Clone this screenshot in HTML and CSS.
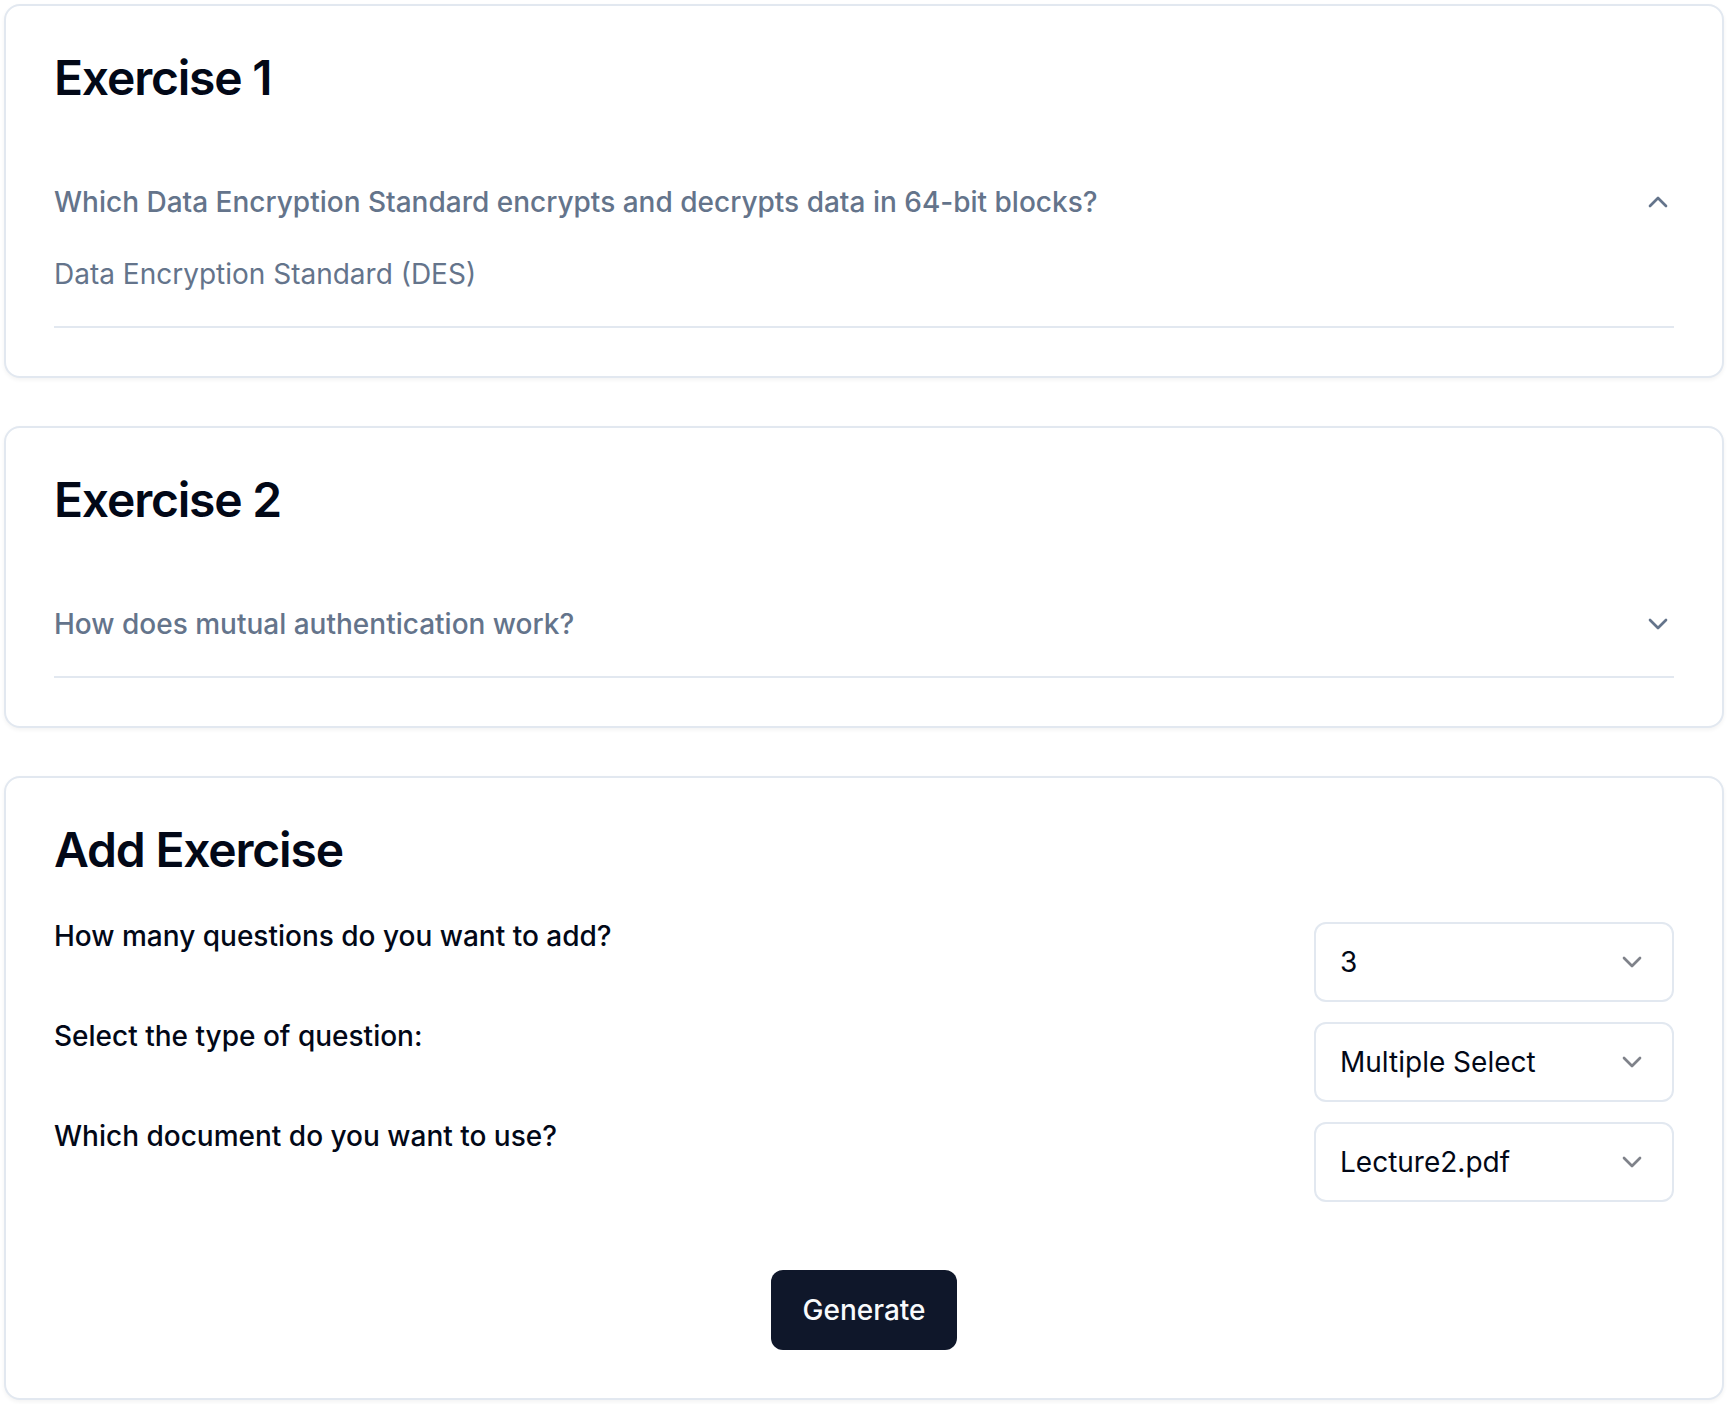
FILE: index.html
```html
<!DOCTYPE html>
<html lang="en">
<head>
<meta charset="utf-8">
<title>Exercises</title>
<link rel="stylesheet" href="styles.css">
</head>
<body>
<main class="page">
  <section class="card">
    <div class="card-header"><h3 class="card-title">Exercise 1</h3></div>
    <div class="card-content">
      <div class="acc-item">
        <button class="acc-trigger" type="button">
          <span>Which Data Encryption Standard encrypts and decrypts data in 64-bit blocks?</span>
          <svg class="acc-icon" viewBox="0 0 24 24" fill="none" stroke="currentColor" stroke-width="2" stroke-linecap="round" stroke-linejoin="round"><path d="m18 15-6-6-6 6"/></svg>
        </button>
        <div class="acc-content">Data Encryption Standard (DES)</div>
      </div>
    </div>
  </section>

  <section class="card">
    <div class="card-header"><h3 class="card-title">Exercise 2</h3></div>
    <div class="card-content">
      <div class="acc-item">
        <button class="acc-trigger" type="button">
          <span>How does mutual authentication work?</span>
          <svg class="acc-icon" viewBox="0 0 24 24" fill="none" stroke="currentColor" stroke-width="2" stroke-linecap="round" stroke-linejoin="round"><path d="m6 9 6 6 6-6"/></svg>
        </button>
      </div>
    </div>
  </section>

  <section class="card">
    <div class="card-header"><h3 class="card-title">Add Exercise</h3></div>
    <div class="card-content">
      <div class="form-rows">
        <div class="form-row">
          <label class="form-label">How many questions do you want to add?</label>
          <button class="select" type="button"><span>3</span>
            <svg class="sel-icon" viewBox="0 0 24 24" fill="none" stroke="currentColor" stroke-width="2" stroke-linecap="round" stroke-linejoin="round"><path d="m6 9 6 6 6-6"/></svg>
          </button>
        </div>
        <div class="form-row">
          <label class="form-label">Select the type of question:</label>
          <button class="select" type="button"><span>Multiple Select</span>
            <svg class="sel-icon" viewBox="0 0 24 24" fill="none" stroke="currentColor" stroke-width="2" stroke-linecap="round" stroke-linejoin="round"><path d="m6 9 6 6 6-6"/></svg>
          </button>
        </div>
        <div class="form-row">
          <label class="form-label">Which document do you want to use?</label>
          <button class="select" type="button"><span>Lecture2.pdf</span>
            <svg class="sel-icon" viewBox="0 0 24 24" fill="none" stroke="currentColor" stroke-width="2" stroke-linecap="round" stroke-linejoin="round"><path d="m6 9 6 6 6-6"/></svg>
          </button>
        </div>
      </div>
      <div class="actions">
        <button class="btn-primary" type="button">Generate</button>
      </div>
    </div>
  </section>
</main>
</body>
</html>
```

FILE: styles.css
```css
* { box-sizing: border-box; }

html, body {
  margin: 0;
  padding: 0;
  background: #ffffff;
}

body {
  font-family: Inter, "Noto Sans", "Liberation Sans", sans-serif;
  color: #020817;
}

.page {
  display: flex;
  flex-direction: column;
  gap: 48px;
  padding: 4px;
}

.card {
  border: 2px solid #e2e8f0;
  border-radius: 16px;
  background: #ffffff;
  box-shadow: 0 2px 4px 0 rgba(0, 0, 0, 0.05);
}

.card-header {
  display: flex;
  flex-direction: column;
  padding: 48px;
}

.card-title {
  margin: 0;
  font-size: 48px;
  line-height: 1;
  font-weight: 600;
  letter-spacing: -1.2px;
  color: #020817;
}

.card-content {
  padding: 0 48px 48px;
}

.acc-item {
  border-bottom: 2px solid #e2e8f0;
}

.acc-trigger {
  display: flex;
  width: 100%;
  align-items: center;
  justify-content: space-between;
  padding: 32px 0;
  margin: 0;
  border: none;
  background: none;
  font-family: inherit;
  font-size: 28px;
  line-height: 40px;
  font-weight: 500;
  color: #64748b;
  text-align: left;
  cursor: pointer;
}

.acc-icon {
  width: 32px;
  height: 32px;
  flex-shrink: 0;
  color: #64748b;
}

.acc-content {
  font-size: 28px;
  line-height: 40px;
  padding-bottom: 32px;
  color: #64748b;
}

.form-rows {
  display: flex;
  flex-direction: column;
  gap: 20px;
}

.form-row {
  display: flex;
  justify-content: space-between;
  align-items: flex-start;
}

.form-label {
  font-size: 28px;
  line-height: 1;
  font-weight: 500;
  color: #020817;
}

.select {
  display: flex;
  align-items: center;
  justify-content: space-between;
  width: 360px;
  height: 80px;
  padding: 0 24px;
  border: 2px solid #e2e8f0;
  border-radius: 12px;
  background: #ffffff;
  font-family: inherit;
  font-size: 28px;
  color: #020817;
  text-align: left;
}

.sel-icon {
  width: 32px;
  height: 32px;
  opacity: 0.5;
  color: #020817;
}

.actions {
  display: flex;
  justify-content: center;
  margin-top: 68px;
}

.btn-primary {
  height: 80px;
  padding: 0 32px;
  border: none;
  border-radius: 12px;
  background: #0f172a;
  color: #f8fafc;
  font-family: inherit;
  font-size: 28px;
  font-weight: 500;
  cursor: pointer;
}
```
